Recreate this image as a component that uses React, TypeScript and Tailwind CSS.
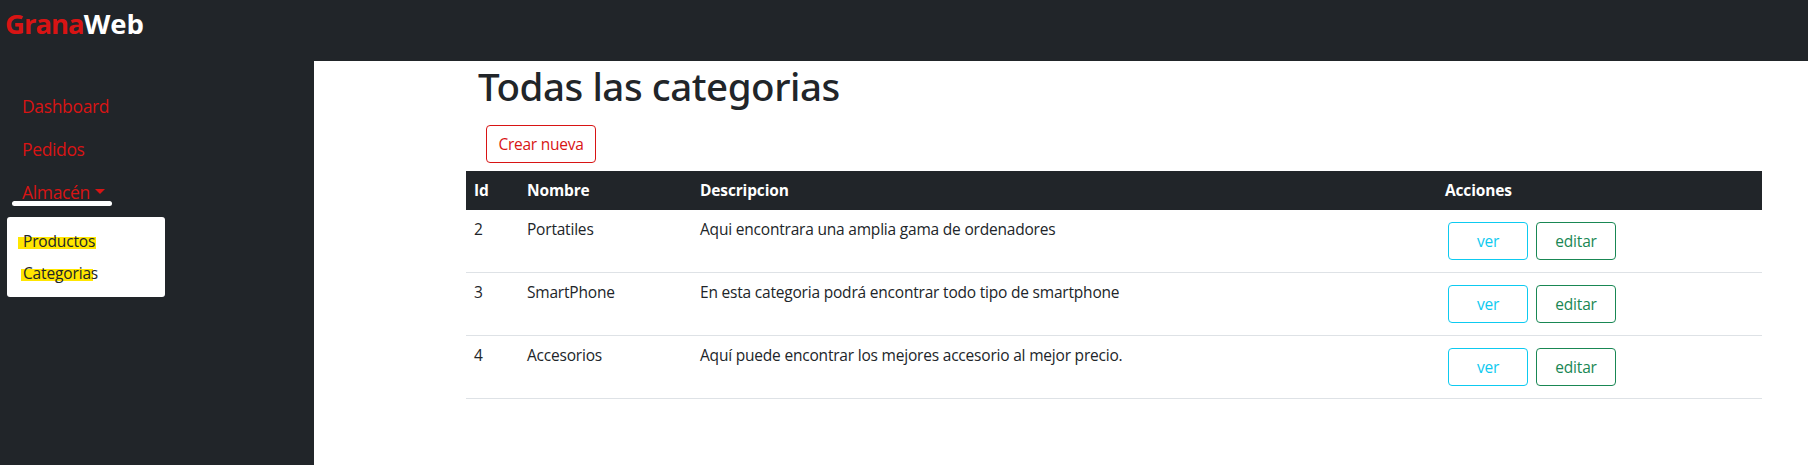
type Category = { id: number; nombre: string; descripcion: string };

const categories: Category[] = [
  { id: 2, nombre: 'Portatiles', descripcion: 'Aqui encontrara una amplia gama de ordenadores' },
  { id: 3, nombre: 'SmartPhone', descripcion: 'En esta categoria podrá encontrar todo tipo de smartphone' },
  { id: 4, nombre: 'Accesorios', descripcion: 'Aquí puede encontrar los mejores accesorio al mejor precio.' },
];

function Sidebar() {
  return (
    <aside className="w-[314px] shrink-0 bg-[#212529] pt-6 text-[#d81414]">
      <nav className="flex flex-col pl-[22px] text-[17.5px] tracking-[-0.35px]">
        <a className="flex h-[43px] items-center">Dashboard</a>
        <a className="flex h-[43px] items-center">Pedidos</a>
        <a className="relative flex h-[43px] items-center">
          Almacén
          <span className="mb-[3px] ml-[5px] border-x-[5.5px] border-t-[5.5px] border-x-transparent border-t-[#d81414]" />
          <span className="absolute bottom-[8px] left-[-10px] h-[5px] w-[100px] rounded-full bg-white" />
        </a>
      </nav>
      <div className="mt-[3px] ml-[7px] flex h-20 w-[158px] flex-col rounded-[3px] bg-white py-2 text-[15.5px] tracking-[-0.15px] text-[#212529]">
        <a className="relative flex h-8 items-center pt-px pl-4">
          <span className="absolute top-[12px] left-[11px] h-3 w-[78px] bg-[#ffe600]" />
          <span className="relative">Productos</span>
        </a>
        <a className="relative flex h-8 items-center pt-px pl-4">
          <span className="absolute top-[12px] left-[14px] h-3 w-[72px] bg-[#ffe600]" />
          <span className="relative">Categorias</span>
        </a>
      </div>
    </aside>
  );
}

function CategoryTable() {
  return (
    <table className="w-[1296px] table-fixed border-separate border-spacing-0 text-left text-[15.5px] leading-6 tracking-[-0.2px]">
      <colgroup>
        <col className="w-[53px]" />
        <col className="w-[173px]" />
        <col className="w-[745px]" />
        <col />
      </colgroup>
      <thead className="bg-[#212529] tracking-[-0.15px] text-white">
        <tr className="h-[39px]">
          <th className="px-2 pt-0 pb-[2px]">Id</th>
          <th className="px-2 pt-0 pb-[2px]">Nombre</th>
          <th className="px-2 pt-0 pb-[2px]">Descripcion</th>
          <th className="px-2 pt-0 pb-[2px]">Acciones</th>
        </tr>
      </thead>
      <tbody>
        {categories.map((c) => (
          <tr key={c.id} className="h-[63px] align-top">
            <td className="border-b border-[#dee2e6] px-2 pt-[7px]">{c.id}</td>
            <td className="border-b border-[#dee2e6] px-2 pt-[7px]">{c.nombre}</td>
            <td className="border-b border-[#dee2e6] px-2 pt-[7px]">{c.descripcion}</td>
            <td className="border-b border-[#dee2e6] px-[11px] pt-3">
              <div className="flex gap-2">
                <button className="h-[38px] w-20 rounded border border-[#0dcaf0] text-[#0dcaf0]">ver</button>
                <button className="h-[38px] w-20 rounded border border-[#198754] text-[#198754]">editar</button>
              </div>
            </td>
          </tr>
        ))}
      </tbody>
    </table>
  );
}

export default function App() {
  return (
    <div className="flex h-[465px] flex-col overflow-hidden bg-white font-['Open_Sans','Noto_Sans',sans-serif] text-[#212529]">
      <header className="h-[61px] shrink-0 bg-[#212529] pl-[5px] text-[27.5px] leading-[48px] font-bold">
        <span className="tracking-[-1px] text-[#d81414]">Grana</span>
        <span className="text-white">Web</span>
      </header>
      <div className="flex grow">
        <Sidebar />
        <main className="pl-[152px]">
          <h1 className="pt-px pl-3 font-['Noto_Sans',sans-serif] text-[38.5px] leading-[48px] font-medium tracking-[-0.45px]">
            Todas las categorias
          </h1>
          <button className="mt-[15px] mb-2 ml-5 block h-[38px] w-[110px] rounded border border-[#d81414] pt-px text-[15.5px] tracking-[-0.25px] text-[#d81414]">
            Crear nueva
          </button>
          <CategoryTable />
        </main>
      </div>
    </div>
  );
}
